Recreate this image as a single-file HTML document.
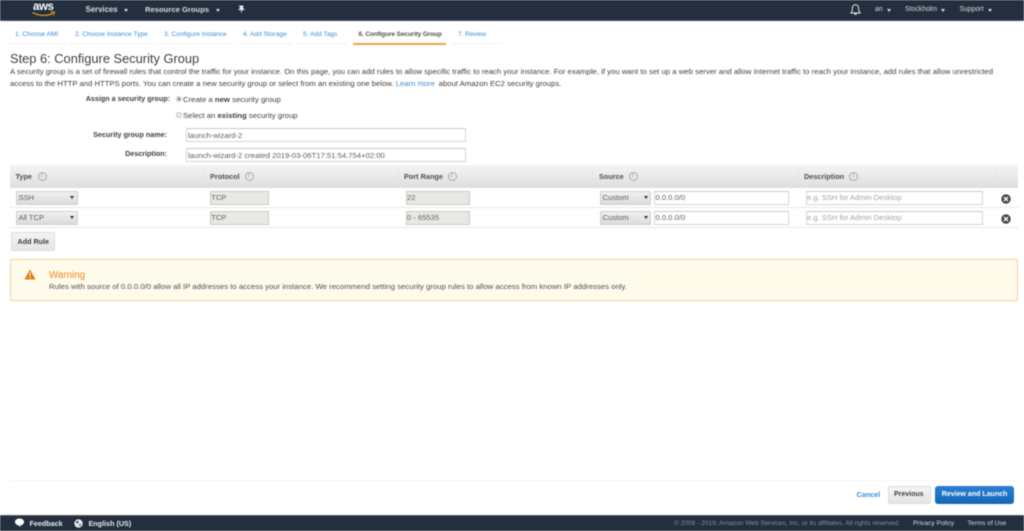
<!DOCTYPE html>
<html><head><meta charset="utf-8"><title>Configure Security Group</title>
<style>
html,body{margin:0;padding:0;background:#fff}
body{width:1024px;height:531px;overflow:hidden;position:relative;font-family:"Liberation Sans",sans-serif;color:#404040;filter:blur(.4px)}
.a,.t{position:absolute;box-sizing:border-box}
.t{white-space:nowrap;line-height:12px;height:12px;font-size:7.76px}
.b{font-weight:bold;font-size:7.2px}
.hdr{color:#d5dbdb;font-size:6.9px}
.tab{color:#3f8fd6;font-size:6.6px}
.ul{height:1px;top:43px;background:#eceeee}
.th{font-weight:bold;color:#505050;font-size:7.3px}
.sep{top:169px;height:15px;width:1px;background:#e6e6e6}
.inp{border:1px solid #d6d6d6;border-top-color:#c8c8c8;background:#fff;height:14px}
.dis{background:#e9e9e3;border-color:#ccccc6}
.sel{background:linear-gradient(#f0f0f0,#dcdcdc);border:1px solid #cfcfcf;border-radius:1px;height:14px}
.arr{width:0;height:0;border-left:2px solid transparent;border-right:2px solid transparent;border-top:3px solid #333}
.tx{color:#5f5f5f;font-size:7.6px}
.ph{color:#a4a4a4;font-size:7.6px}
.car{width:0;height:0;border-left:2.5px solid transparent;border-right:2.5px solid transparent;border-top:3px solid #d5dbdb}
.ic{width:9px;height:9px;border:1px solid #aaa;border-radius:50%;font-size:6px;line-height:7px;text-align:center;color:#888;font-family:"Liberation Serif",serif}
.x{width:10px;height:10px}
.ft{font-size:6.6px;top:518px}
</style></head><body>

<div class="a" style="left:0;top:0;width:1024px;height:21px;background:#232f3e;border-bottom:1px solid #46515e"></div>
<div class="t" style="left:33px;top:.5px;color:#fff;font-size:11.500px;font-weight:bold;letter-spacing:-.4px">aws</div>
<svg class="a" style="left:31px;top:10px" width="26" height="8" viewBox="0 0 26 8"><path d="M1.500 2.500C8 6 16 6.500 22 3.200" fill="none" stroke="#f29a1f" stroke-width="1.200"/><path d="M19.500 2 L23.500 2 L22.500 5.500" fill="none" stroke="#f29a1f" stroke-width="1"/></svg>
<div class="t b" style="left:85.500px;top:4px;color:#d5dbdb;font-size:7.800px">Services</div>
<div class="a car" style="left:124.200px;top:9px"></div>
<div class="t b" style="left:145px;top:4px;color:#d5dbdb;font-size:7.650px">Resource Groups</div>
<div class="a car" style="left:215.500px;top:9px"></div>
<svg class="a" style="left:237px;top:5px" width="9" height="9" viewBox="0 0 9 9"><path d="M2 0.500H6.500L6 3L8 5H5.200L4.600 8.500L3.800 5H1L3 3Z" fill="#e6e9ea"/></svg>

<svg class="a" style="left:850px;top:3px" width="11" height="13" viewBox="0 0 11 13"><path d="M1 10 C2.400 8.600 2.300 7 2.400 5 C2.600 2.800 4 1.600 5.500 1.600 C7 1.600 8.400 2.800 8.600 5 C8.700 7 8.600 8.600 10 10 Z" fill="none" stroke="#e6e9ea" stroke-width="1"/><path d="M4.300 11.200 H6.700" stroke="#e6e9ea" stroke-width="1.200"/></svg>
<div class="t hdr" style="left:875px;top:4px">an</div>
<div class="a car" style="left:886.500px;top:9px"></div>
<div class="t hdr" style="left:905px;top:4px">Stockholm</div>
<div class="a car" style="left:940.500px;top:9px"></div>
<div class="t hdr" style="left:959.500px;top:4px">Support</div>
<div class="a car" style="left:987.500px;top:9px"></div>

<div class="t tab" style="left:15px;top:29px">1. Choose AMI</div>
<div class="a ul" style="left:8px;width:57px"></div>
<div class="t tab" style="left:75px;top:29px">2. Choose Instance Type</div>
<div class="a ul" style="left:69px;width:84px"></div>
<div class="t tab" style="left:164px;top:29px">3. Configure Instance</div>
<div class="a ul" style="left:156px;width:76px"></div>
<div class="t tab" style="left:243px;top:29px">4. Add Storage</div>
<div class="a ul" style="left:238px;width:54px"></div>
<div class="t tab" style="left:303px;top:29px">5. Add Tags</div>
<div class="a ul" style="left:297px;width:49px"></div>
<div class="t tab" style="left:358.500px;top:29px;color:#555;font-weight:bold;font-size:6.500px;letter-spacing:-.13px">6. Configure Security Group</div>
<div class="a ul" style="left:353px;width:93px;height:1.500px;background:#f0a24a"></div>
<div class="t tab" style="left:458px;top:29px;font-size:6.400px">7. Review</div>
<div class="a ul" style="left:452px;width:50px"></div>

<div class="t" style="left:10px;top:52px;height:14px;line-height:14px;font-size:12.850px;color:#404040">Step 6: Configure Security Group</div>
<div class="t" style="left:10px;top:66px">A security group is a set of firewall rules that control the traffic for your instance. On this page, you can add rules to allow specific traffic to reach your instance. For example, if you want to set up a web server and allow Internet traffic to reach your instance, add rules that allow unrestricted</div>
<div class="t" style="left:10px;top:78px;font-size:7.700px">access to the HTTP and HTTPS ports. You can create a new security group or select from an existing one below. <span style="color:#3f8fd6">Learn more</span><span style="margin-left:1.500px"> about Amazon EC2 security groups.</span></div>

<div class="t b" style="left:70px;width:100px;text-align:right;top:93px;color:#404040">Assign a security group:</div>
<div class="a" style="left:176px;top:96px;width:6px;height:6px;border-radius:50%;border:1px solid #c4c4c4;background:radial-gradient(#555 35%,#eee 45%)"></div>
<div class="t" style="left:183px;top:93.500px">Create a <b>new</b> security group</div>
<div class="a" style="left:176px;top:111.500px;width:6px;height:6px;border-radius:50%;border:1px solid #c4c4c4;background:#eee"></div>
<div class="t" style="left:183px;top:109.500px">Select an <b>existing</b> security group</div>

<div class="t b" style="left:60px;width:107px;text-align:right;top:128.500px">Security group name:</div>
<div class="a inp" style="left:186px;top:128px;width:279.500px"></div>
<div class="t tx" style="left:188px;top:129.500px;font-size:7.700px">launch-wizard-2</div>
<div class="t b" style="left:60px;width:107px;text-align:right;top:148px">Description:</div>
<div class="a inp" style="left:186px;top:147.500px;width:279.500px"></div>
<div class="t tx" style="left:188px;top:149.500px;font-size:7.700px">launch-wizard-2 created 2019-03-06T17:51:54.754+02:00</div>

<div class="a" style="left:9.500px;top:165px;width:1008px;height:23px;background:linear-gradient(#f4f4f4,#dedede)"></div>
<div class="a sep" style="left:204px"></div><div class="a sep" style="left:398px"></div><div class="a sep" style="left:592px"></div><div class="a sep" style="left:798px"></div><div class="a sep" style="left:995px"></div>
<div class="t th" style="left:15.500px;top:171px">Type</div><div class="a ic" style="left:37.500px;top:172px">i</div>
<div class="t th" style="left:210px;top:171px">Protocol</div><div class="a ic" style="left:244.500px;top:172px">i</div>
<div class="t th" style="left:404px;top:171px">Port Range</div><div class="a ic" style="left:447.500px;top:172px">i</div>
<div class="t th" style="left:599px;top:171px">Source</div><div class="a ic" style="left:628.500px;top:172px">i</div>
<div class="t th" style="left:804px;top:171px">Description</div><div class="a ic" style="left:849px;top:172px">i</div>

<div class="a" style="left:9.500px;top:207px;width:1008px;height:1px;background:#e8e8e8"></div>
<div class="a" style="left:9.500px;top:227px;width:1008px;height:1px;background:#e8e8e8"></div>

<!-- row 1 -->
<div class="a sel" style="left:15.500px;top:191px;width:62px"></div><div class="t tx" style="left:18.500px;top:192px">SSH</div><div class="a arr" style="left:70px;top:196px"></div>
<div class="a inp dis" style="left:210px;top:191px;width:58.500px"></div><div class="t tx" style="left:211.200px;top:192px">TCP</div>
<div class="a inp dis" style="left:406px;top:191px;width:64px"></div><div class="t tx" style="left:407px;top:192px">22</div>
<div class="a sel" style="left:599.500px;top:191px;width:51.500px"></div><div class="t tx" style="left:602.500px;top:192px">Custom</div><div class="a arr" style="left:644px;top:196px"></div>
<div class="a inp" style="left:654px;top:191px;width:134.500px"></div><div class="t tx" style="left:655.500px;top:192px">0.0.0.0/0</div>
<div class="a inp" style="left:805.500px;top:191px;width:177px"></div><div class="t ph" style="left:807px;top:192px">e.g. SSH for Admin Desktop</div>
<svg class="a x" style="left:1001px;top:194px" viewBox="0 0 10 10"><circle cx="5" cy="5" r="4.700" fill="#444"/><path d="M3 3L7 7M7 3L3 7" stroke="#fff" stroke-width="1.300"/></svg>

<!-- row 2 -->
<div class="a sel" style="left:15.500px;top:211px;width:62px"></div><div class="t tx" style="left:18.500px;top:212px">All TCP</div><div class="a arr" style="left:70px;top:216px"></div>
<div class="a inp dis" style="left:210px;top:211px;width:58.500px"></div><div class="t tx" style="left:211.200px;top:212px">TCP</div>
<div class="a inp dis" style="left:406px;top:211px;width:64px"></div><div class="t tx" style="left:407px;top:212px">0 - 65535</div>
<div class="a sel" style="left:599.500px;top:211px;width:51.500px"></div><div class="t tx" style="left:602.500px;top:212px">Custom</div><div class="a arr" style="left:644px;top:216px"></div>
<div class="a inp" style="left:654px;top:211px;width:134.500px"></div><div class="t tx" style="left:655.500px;top:212px">0.0.0.0/0</div>
<div class="a inp" style="left:805.500px;top:211px;width:177px"></div><div class="t ph" style="left:807px;top:212px">e.g. SSH for Admin Desktop</div>
<svg class="a x" style="left:1001px;top:214px" viewBox="0 0 10 10"><circle cx="5" cy="5" r="4.700" fill="#444"/><path d="M3 3L7 7M7 3L3 7" stroke="#fff" stroke-width="1.300"/></svg>

<div class="a" style="left:11px;top:232px;width:44px;height:19px;background:linear-gradient(#f4f4f4,#e6e6e6);border:1px solid #ddd;border-radius:2px"></div>
<div class="t b" style="left:17.500px;top:235.500px;color:#404040">Add Rule</div>

<div class="a" style="left:9.500px;top:259px;width:1008px;height:42px;background:#fffbeb;border:1px solid #f8cf96;border-radius:2px"></div>
<svg class="a" style="left:24px;top:269px" width="12" height="11" viewBox="0 0 12 11"><path d="M6 .5L11.500 10.500H.5Z" fill="#df7a14"/><path d="M6 3.500V7M6 8V9.500" stroke="#fffbeb" stroke-width="1.200"/></svg>
<div class="t" style="left:49px;top:269.500px;font-size:9.800px;color:#e8882a">Warning</div>
<div class="t" style="left:49px;top:281px;color:#505050">Rules with source of 0.0.0.0/0 allow all IP addresses to access your instance. We recommend setting security group rules to allow access from known IP addresses only.</div>

<div class="a" style="left:9.500px;top:480px;width:1008px;height:1px;background:#f5f5f5"></div>
<div class="t b" style="left:856.500px;top:489px;color:#3f8fd6">Cancel</div>
<div class="a" style="left:887.500px;top:486px;width:43px;height:18px;background:linear-gradient(#f5f5f5,#e4e4e4);border:1px solid #ddd;border-radius:2px"></div>
<div class="t b" style="left:894px;top:489px;color:#404040;font-size:7px">Previous</div>
<div class="a" style="left:935px;top:486px;width:79px;height:18px;background:linear-gradient(#2a7fd0,#1466b8);border-radius:3px"></div>
<div class="t b" style="left:941.700px;top:489px;color:#fff;font-size:7.050px">Review and Launch</div>

<div class="a" style="left:0;top:515px;width:1024px;height:16px;background:#232f3e;border-top:1px solid #535c68"></div>
<svg class="a" style="left:14px;top:518px" width="11" height="10" viewBox="0 0 11 10"><path d="M5.500 .5C8.300 .5 10 2 10 4C10 6 8.300 7.300 5.800 7.300L7.500 9.300L3.500 7C1.800 6.500 1 5.300 1 4C1 2 2.800 .5 5.500 .5Z" fill="#fff"/></svg>
<div class="t b" style="left:29.500px;top:517.500px;color:#e6e9ea">Feedback</div>
<svg class="a" style="left:74px;top:519px" width="9" height="9" viewBox="0 0 9 9"><circle cx="4.500" cy="4.500" r="4.200" fill="#e6e9ea"/><path d="M2 2.500L4.500 2L4 4.500L2.500 4ZM5 5.500L7 5L6 7.500Z" fill="#232f3e"/></svg>
<div class="t b" style="left:88.500px;top:517.500px;color:#e6e9ea">English (US)</div>
<div class="t ft" style="left:674px;color:#87909a">© 2008 - 2019, Amazon Web Services, Inc. or its affiliates. All rights reserved.</div>
<div class="t ft" style="left:913px;color:#d5dbdb">Privacy Policy</div>
<div class="t ft" style="left:967.500px;color:#d5dbdb">Terms of Use</div>
</body></html>
